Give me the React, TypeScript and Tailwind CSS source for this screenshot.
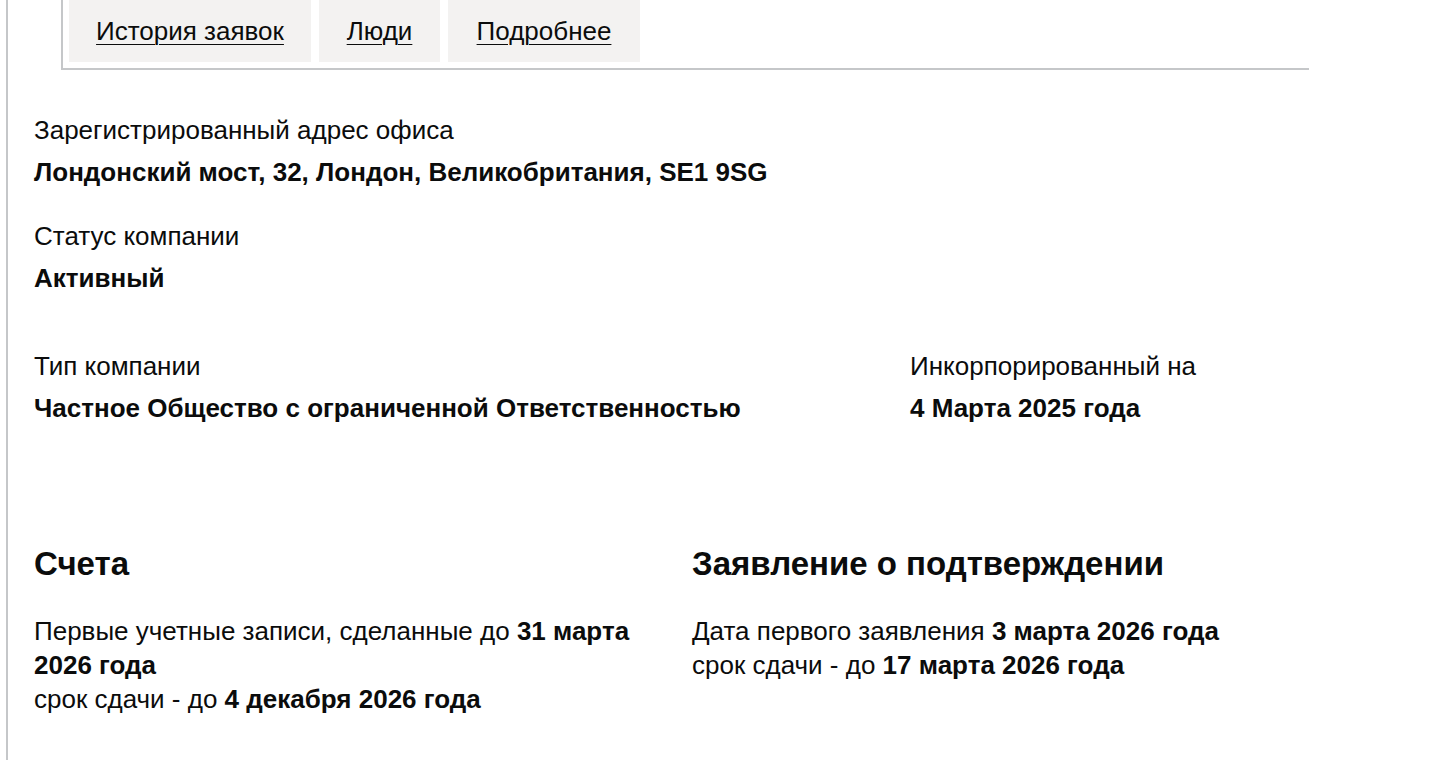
import React from "react";

const font = { fontFamily: '"Liberation Sans", Arial, sans-serif' };

function Tab({ label, w }: { label: string; w: string }) {
  return (
    <div className={`flex h-[62px] items-center justify-center bg-[#f3f2f1] ${w}`}>
      <a className="text-[26px] leading-none text-[#0b0c0c] underline decoration-1 underline-offset-[4px]" href="#">
        {label}
      </a>
    </div>
  );
}

function Item({ label, value }: { label: string; value: string }) {
  return (
    <div className="flex flex-col gap-[8px]">
      <div className="text-[26px] leading-[34px]">{label}</div>
      <div className="text-[26px] font-bold leading-[34px]">{value}</div>
    </div>
  );
}

export default function App() {
  return (
    <div style={font} className="h-[760px] w-[1430px] overflow-hidden bg-white text-[#0b0c0c]">
      <div className="ml-[6px] h-full border-l-2 border-[#c5c7c9] pl-[26px]">
        <div className="ml-[27px] mr-[121px] flex gap-[8px] border-b-2 border-l-2 border-[#c5c7c9] pb-[6px] pl-[6px]">
          <Tab label="История заявок" w="w-[242px]" />
          <Tab label="Люди" w="w-[121px]" />
          <Tab label="Подробнее" w="w-[192px]" />
        </div>

        <div className="mt-[43px] flex flex-col">
          <Item label="Зарегистрированный адрес офиса" value="Лондонский мост, 32, Лондон, Великобритания, SE1 9SG" />
          <div className="mt-[30px]">
            <Item label="Статус компании" value="Активный" />
          </div>
          <div className="mt-[54px] flex">
            <div className="w-[876px]">
              <Item label="Тип компании" value="Частное Общество с ограниченной Ответственностью" />
            </div>
            <Item label="Инкорпорированный на" value="4 Марта 2025 года" />
          </div>
        </div>

        <div className="mt-[119px] grid w-[1282px] grid-cols-2 gap-x-[34px]">
          <div>
            <h2 className="text-[33px] font-bold leading-[40px]">Счета</h2>
            <p className="mt-[30px] text-[26px] leading-[34px]">
              Первые учетные записи, сделанные до <b>31 марта 2026 года</b>
              <br />
              срок сдачи - до <b>4 декабря 2026 года</b>
            </p>
          </div>
          <div>
            <h2 className="text-[33px] font-bold leading-[40px]">Заявление о подтверждении</h2>
            <p className="mt-[30px] text-[26px] leading-[34px]">
              Дата первого заявления <b>3 марта 2026 года</b>
              <br />
              срок сдачи - до <b>17 марта 2026 года</b>
            </p>
          </div>
        </div>
      </div>
    </div>
  );
}
